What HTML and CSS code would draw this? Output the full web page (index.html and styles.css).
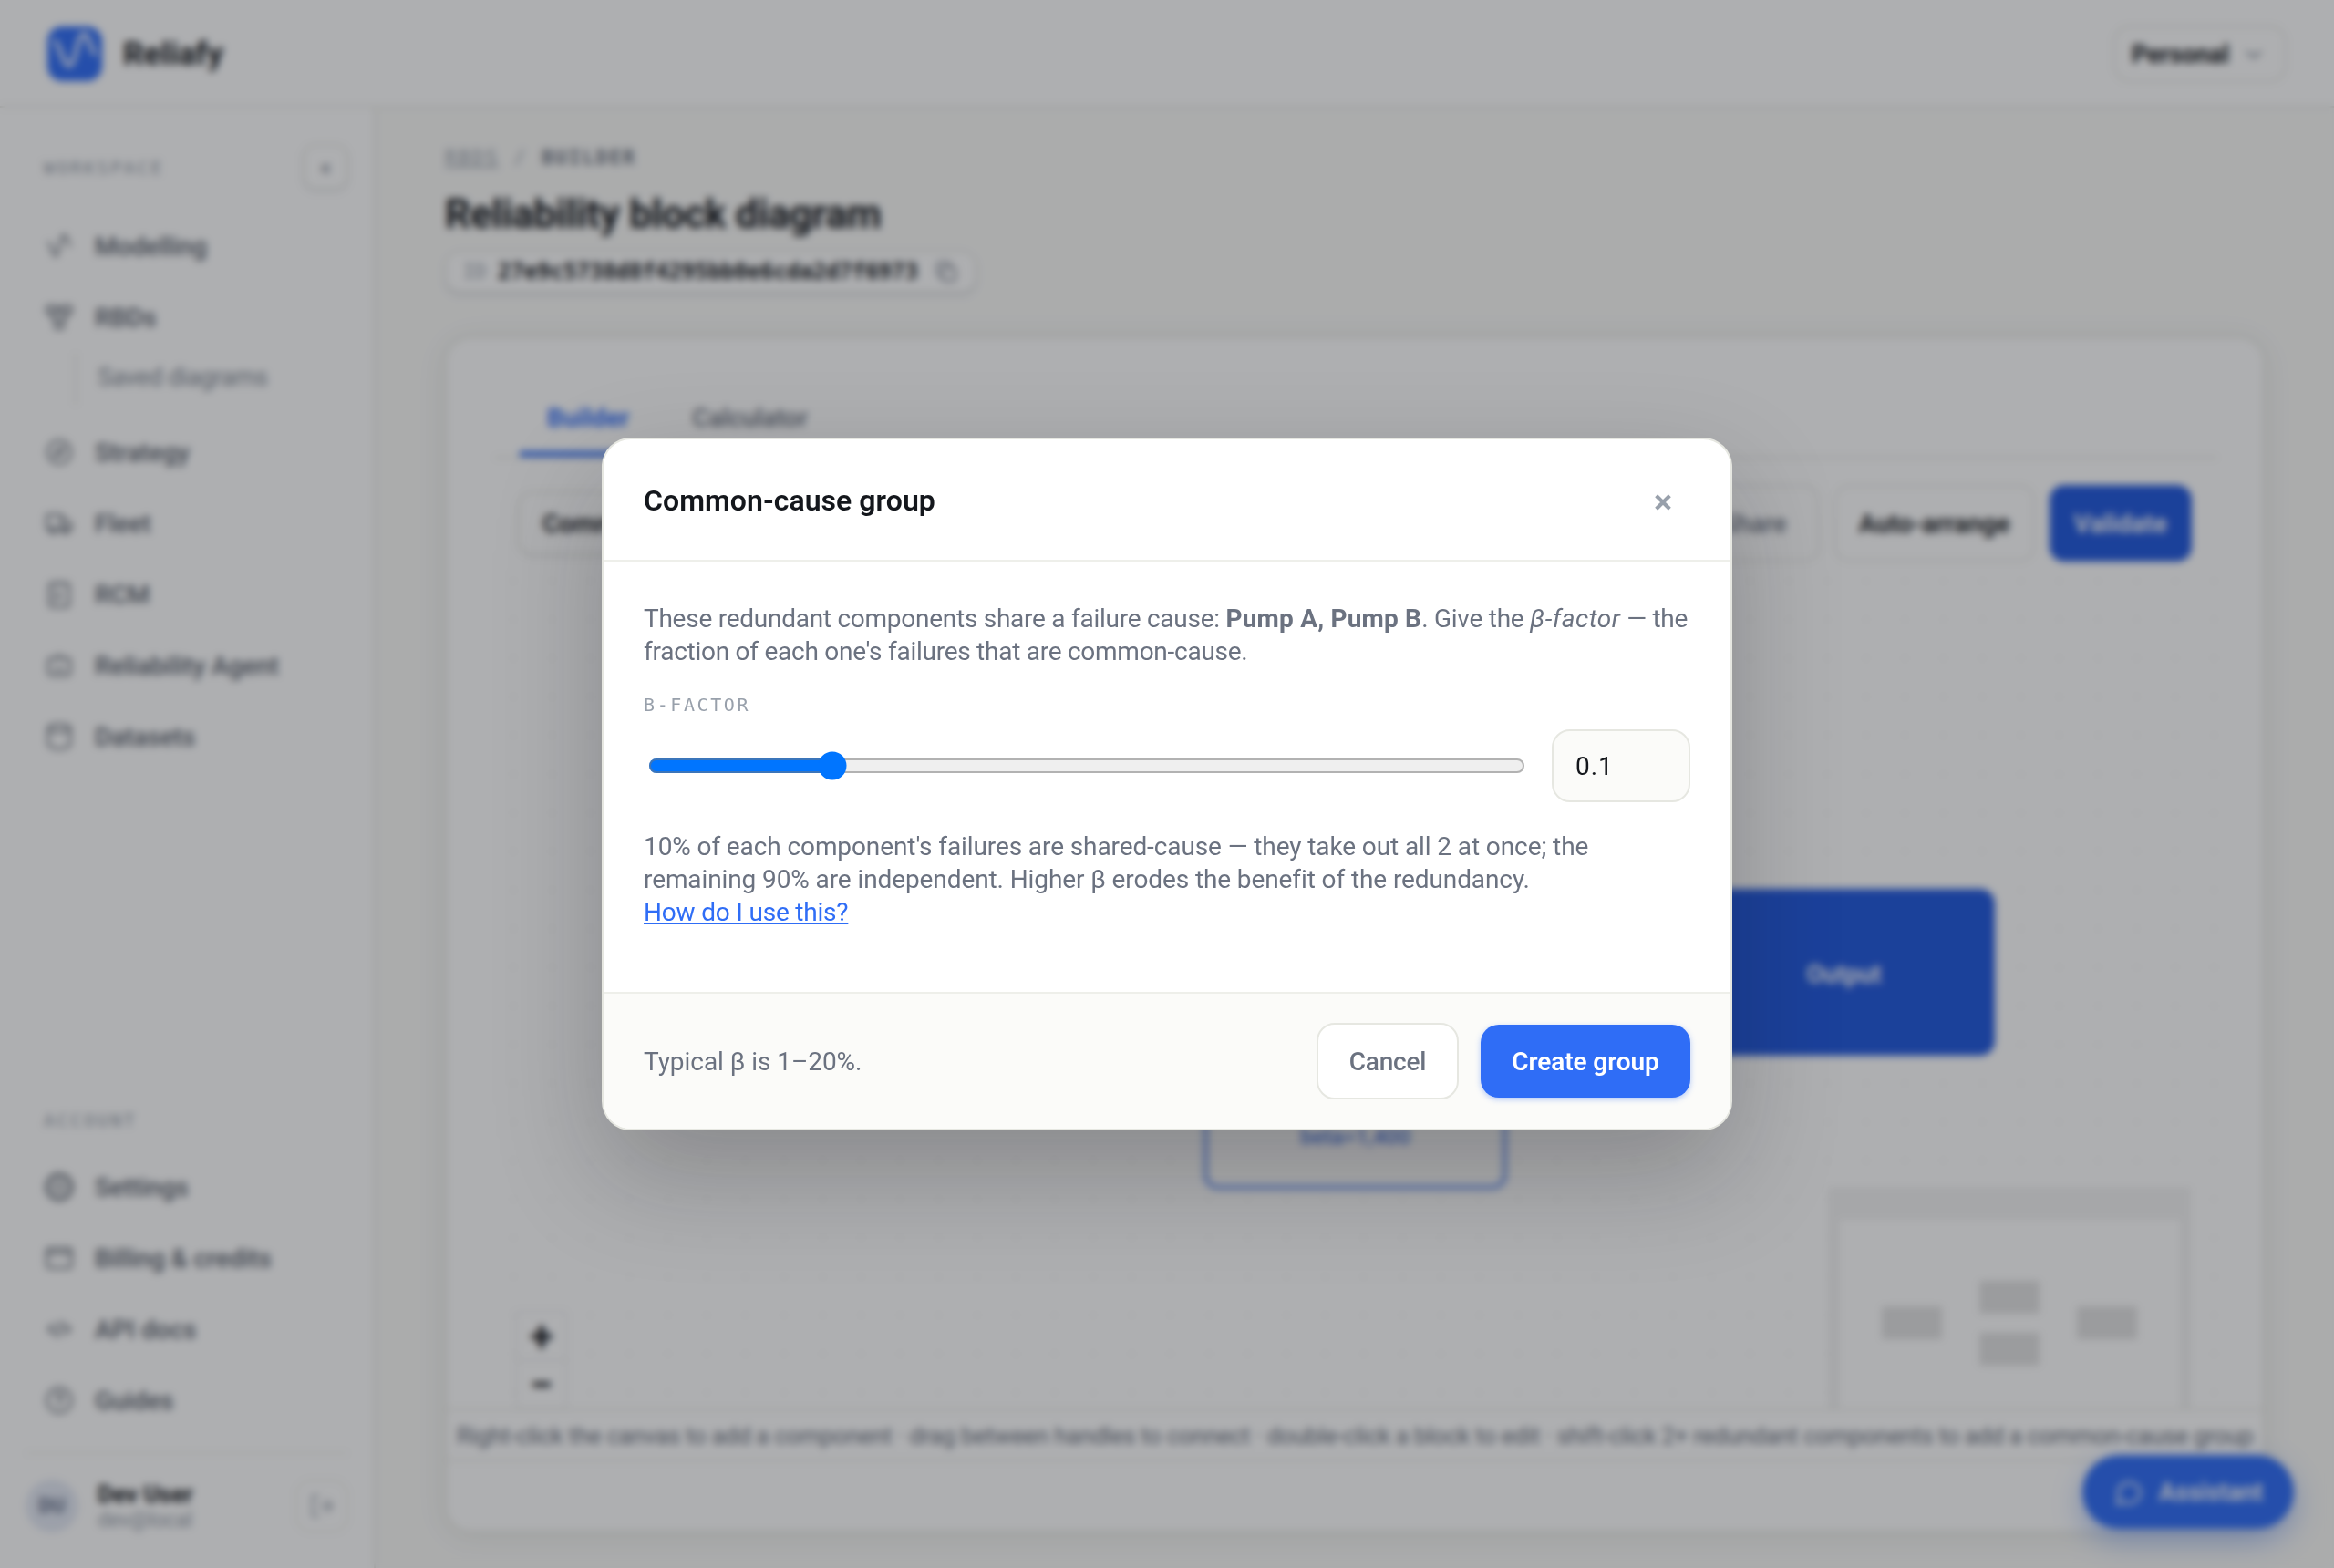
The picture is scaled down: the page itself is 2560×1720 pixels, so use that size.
FILE: index.html
```html
<!DOCTYPE html>
<html lang="en">
<head>
	<meta charset="UTF-8">
	<title>Reliafy</title>
	<link rel="stylesheet" href="styles.css">
</head>
<body>
	<div class="app">
		<header class="topbar">
			<div class="brand">
				<span class="logo">
					<svg viewBox="0 0 60 60"><path d="M8 16 C13 18 17 43 24 43 C31 43 33 8 40 8 C45 8 47 25 52 30"/></svg>
				</span>
				<span class="brand-name">Reliafy</span>
			</div>
			<button class="account">
				<span>Personal</span>
				<svg class="chevron" viewBox="0 0 20 20"><path d="M3 7l7 6 7-6"/></svg>
			</button>
		</header>

		<aside class="sidebar">
			<div class="side-head">
				<span class="side-label">WORKSPACE</span>
				<button class="collapse">«</button>
			</div>
			<nav class="nav">
				<a class="nav-item"><svg viewBox="0 0 24 24"><path d="M3 9c2.500 0 3 11 6 11s3.500-17 7-17c2.500 0 3 7 5 9"/></svg><span>Modelling</span></a>
				<a class="nav-item"><svg viewBox="0 0 24 24"><rect x="2" y="3" width="8" height="6" rx="1"/><rect x="14" y="3" width="8" height="6" rx="1"/><rect x="8.500" y="15" width="7" height="6" rx="1"/><path d="M10 6h4M5 9l4.500 6M19 9l-4.500 6"/></svg><span>RBDs</span></a>
				<a class="nav-sub">Saved diagrams</a>
				<a class="nav-item"><svg viewBox="0 0 24 24"><circle cx="12" cy="12" r="9.5"/><path d="M15.500 8.500l-2 5-5 2 2-5z"/></svg><span>Strategy</span></a>
				<a class="nav-item"><svg viewBox="0 0 24 24"><path d="M2 5h12v12H2zM14 9h4l4 4v4h-8"/><circle cx="7" cy="18" r="2"/><circle cx="17" cy="18" r="2"/></svg><span>Fleet</span></a>
				<a class="nav-item"><svg viewBox="0 0 24 24"><rect x="4" y="3" width="16" height="19" rx="2"/><path d="M9 3h6M8 15l2 1 4-4M8 10h3"/></svg><span>RCM</span></a>
				<a class="nav-item"><svg viewBox="0 0 24 24"><path d="M12 3v3M3 9q0-3 3-3h12q3 0 3 3v8q0 3-3 3H6q-3 0-3-3zM9 15h6"/></svg><span>Reliability Agent</span></a>
				<a class="nav-item"><svg viewBox="0 0 24 24"><ellipse cx="12" cy="5" rx="9" ry="3"/><path d="M3 5v13c0 2 4 4 9 4s9-2 9-4V5"/></svg><span>Datasets</span></a>
			</nav>
			<div class="side-bottom">
				<div class="side-label">ACCOUNT</div>
				<a class="nav-item"><svg viewBox="0 0 24 24"><circle cx="12" cy="12" r="3.5"/><circle cx="12" cy="12" r="9"/><circle cx="12" cy="12" r="11" stroke-dasharray="3 2.76"/></svg><span>Settings</span></a>
				<a class="nav-item"><svg viewBox="0 0 24 24"><rect x="2" y="4" width="20" height="16" rx="2"/><path d="M2 8h20"/></svg><span>Billing &amp; credits</span></a>
				<a class="nav-item"><svg viewBox="0 0 24 24"><path d="M8 8l-5 4 5 4M16 8l5 4-5 4M13.500 6l-3 12"/></svg><span>API docs</span></a>
				<a class="nav-item"><svg viewBox="0 0 24 24"><circle cx="12" cy="12" r="10"/><path d="M9.500 9a2.500 2.500 0 1 1 2.500 3v2M12 17v.5"/></svg><span>Guides</span></a>
				<div class="user">
					<span class="avatar">DU</span>
					<div class="user-text">
						<div class="user-name">Dev User</div>
						<div class="user-mail">dev@local</div>
					</div>
					<button class="logout"><svg viewBox="0 0 24 24"><path d="M9 3H4v18h5M10 12h11M16 7l5 5-5 5"/></svg></button>
				</div>
			</div>
		</aside>

		<main class="main">
			<div class="crumbs"><a>RBDS</a><span>/</span><b>BUILDER</b></div>
			<h1>Reliability block diagram</h1>
			<div class="id-pill">
				<span class="id-key">ID</span>
				<span class="id-value">27e9c5738d8f4295bb0e6cda2d7f6973</span>
				<svg viewBox="0 0 24 24"><rect x="8" y="8" width="13" height="13" rx="2"/><path d="M16 8V5q0-2-2-2H5Q3 3 3 5v9q0 2 2 2h3"/></svg>
			</div>
			<section class="card">
				<div class="tabs">
					<a class="tab active">Builder</a>
					<a class="tab">Calculator</a>
				</div>
				<div class="toolbar">
					<button class="tool small">Common-cause</button>
					<span class="tool-space"></span>
					<button class="tool muted">Share</button>
					<button class="tool">Auto-arrange</button>
					<button class="tool primary">Validate</button>
				</div>
				<div class="canvas">
					<div class="node output">Output</div>
					<div class="node pump">beta=1,400</div>
					<div class="zoom">
						<div>+</div>
						<div>−</div>
						<div></div>
					</div>
					<svg class="minimap" viewBox="0 0 398 300">
						<rect class="mask" width="398" height="300"/>
						<rect class="view" x="13" y="36" width="373" height="264"/>
						<rect class="mini" x="59" y="131" width="66" height="36"/>
						<rect class="mini" x="166" y="103" width="66" height="36"/>
						<rect class="mini" x="166" y="160" width="66" height="36"/>
						<rect class="mini" x="273" y="131" width="66" height="36"/>
					</svg>
				</div>
				<div class="hint">Right-click the canvas to add a component · drag between handles to connect · double-click a block to edit · shift-click 2+ redundant components to add a common-cause group</div>
			</section>
		</main>

		<button class="assistant">
			<svg viewBox="0 0 24 24"><path d="M3 21l1.500-5A8.500 8 0 1 1 8 19.500z"/></svg>
			<span>Assistant</span>
		</button>
	</div>

	<div class="overlay">
		<div class="modal">
			<div class="modal-head">
				<h2>Common-cause group</h2>
				<button class="close"><svg viewBox="0 0 16 18"><path d="M2 3l12 12M14 3L2 15"/></svg></button>
			</div>
			<div class="modal-body">
				<p class="intro">These redundant components share a failure cause: <b>Pump A, Pump B</b>. Give the <i>β-factor</i> — the<br>fraction of each one's failures that are common-cause.</p>
				<label class="field-label">B-FACTOR</label>
				<div class="beta-row">
					<input class="range" type="range" min="0" max="0.5" step="0.01" value="0.1">
					<input class="number" type="text" value="0.1">
				</div>
				<p class="explain">10% of each component's failures are shared-cause — they take out all 2 at once; the<br>remaining 90% are independent. Higher β erodes the benefit of the redundancy.<br><a>How do I use this?</a></p>
			</div>
			<div class="modal-foot">
				<span class="typical">Typical β is 1–20%.</span>
				<button class="btn cancel">Cancel</button>
				<button class="btn create">Create group</button>
			</div>
		</div>
	</div>
</body>
</html>
```

FILE: styles.css
```css
*{
	box-sizing: border-box;
	margin: 0;
	padding: 0;
}
body{
	width: 2560px;
	height: 1720px;
	overflow: hidden;
	background: #fafaf8;
	color: #14171c;
	font-family: Roboto, "Liberation Sans", sans-serif;
	font-size: 28px;
}
button, input{
	font: inherit;
	color: inherit;
	border: none;
	background: none;
}
svg{
	fill: none;
	stroke: currentColor;
	stroke-width: 1.7;
	stroke-linecap: round;
	stroke-linejoin: round;
	flex: none;
}

/* page shell */
.app{
	width: 2560px;
	height: 1720px;
	display: grid;
	grid-template-columns: 412px minmax(0, 1fr);
	grid-template-rows: 118px minmax(0, 1fr);
}
.topbar{
	grid-column: 1 / 3;
	display: flex;
	align-items: center;
	justify-content: space-between;
	padding: 1px 52px 0;
	background: #fff;
	border-bottom: 2px solid #e6e7e1;
}
.brand{
	display: flex;
	align-items: center;
	gap: 23px;
}
.logo{
	width: 60px;
	height: 60px;
	border-radius: 16px;
	background: #2f6df6;
	color: #fff;
}
.logo svg{
	display: block;
	stroke-width: 4;
}
.brand-name{
	padding-top: 2px;
	font-size: 35px;
	font-weight: 700;
	letter-spacing: 0.2px;
}
.account{
	display: flex;
	align-items: center;
	justify-content: space-between;
	width: 190px;
	height: 62px;
	padding: 2px 24px 0 18px;
	border: 2px solid #e6e7e1;
	border-radius: 18px;
	font-weight: 700;
	font-size: 27px;
	letter-spacing: -0.1px;
}
.chevron{
	width: 20px;
	height: 20px;
	color: #98a0ab;
	stroke-width: 3;
}

/* sidebar */
.sidebar{
	display: flex;
	flex-direction: column;
	padding: 40px 28px 39px;
	background: #fff;
	border-right: 2px solid #e6e7e1;
}
.side-head{
	display: flex;
	align-items: center;
	justify-content: space-between;
	height: 50px;
	margin-bottom: 23px;
}
.side-label{
	padding: 2px 0 0 20px;
	font: 20px/30px "DejaVu Sans Mono", monospace;
	letter-spacing: 2.6px;
	color: #98a0ab;
}
.collapse{
	width: 50px;
	height: 50px;
	border: 2px solid #e6e7e1;
	border-radius: 14px;
	box-shadow: 0 2px 4px rgba(20,30,80,.12);
	color: #6b7280;
	font-size: 25px;
}
.nav-item{
	display: flex;
	align-items: center;
	gap: 23px;
	height: 78px;
	padding-left: 21px;
	color: #5b626d;
	font-weight: 500;
	font-size: 28px;
	letter-spacing: -0.1px;
}
.nav-item svg{
	width: 32px;
	height: 32px;
}
.nav-sub{
	display: block;
	height: 58px;
	margin: 0 0 12px 54px;
	padding-left: 23px;
	border-left: 2px solid #e6e7e1;
	color: #828a95;
	font-size: 27px;
	line-height: 54px;
	letter-spacing: -0.4px;
}
.side-bottom{
	margin-top: auto;
}
.side-bottom .side-label{
	margin-bottom: 19px;
}
.user{
	display: flex;
	align-items: center;
	margin-top: 18px;
	padding-top: 28px;
	border-top: 2px solid #eeefea;
}
.avatar{
	width: 58px;
	height: 58px;
	margin-right: 21px;
	border-radius: 50%;
	background: #e4e9f4;
	color: #5e6a85;
	font-size: 22px;
	font-weight: 700;
	line-height: 58px;
	text-align: center;
}
.user-text{
	flex: 1;
}
.user-name{
	font-size: 26px;
	font-weight: 700;
	line-height: 32px;
}
.user-mail{
	color: #98a0ab;
	font-size: 23px;
	line-height: 26px;
	letter-spacing: -0.2px;
}
.logout{
	width: 58px;
	height: 58px;
	border: 2px solid #eeefea;
	border-radius: 16px;
	color: #98a0ab;
}
.logout svg{
	width: 30px;
	height: 30px;
	display: block;
	margin: auto;
}

/* main column */
.main{
	padding: 39px 76px 0;
}
.crumbs{
	display: flex;
	gap: 16px;
	font: 21px/32px "DejaVu Sans Mono", monospace;
	letter-spacing: 2.2px;
	color: #98a0ab;
}
.crumbs a{
	text-decoration: underline;
}
.crumbs b{
	color: #6b7280;
}
h1{
	margin-top: 18px;
	font-size: 44px;
	font-weight: 700;
	line-height: 56px;
	letter-spacing: -0.35px;
}
.id-pill{
	display: flex;
	align-items: center;
	width: 583px;
	height: 46px;
	margin-top: 12px;
	padding-left: 18px;
	background: #fff;
	border: 2px solid #e6e7e1;
	border-radius: 16px;
	box-shadow: 0 3px 4px rgba(20,30,100,.12);
	font-family: "DejaVu Sans Mono", monospace;
}
.id-key{
	width: 38px;
	color: #98a0ab;
	font-size: 21px;
}
.id-value{
	width: 479px;
	font-size: 24px;
	font-weight: 700;
	letter-spacing: -0.05px;
}
.id-pill svg{
	width: 26px;
	height: 26px;
	color: #6b7280;
}
.card{
	display: flex;
	flex-direction: column;
	height: 1312px;
	margin-top: 48px;
	padding-top: 46px;
	background: #fff;
	border: 2px solid #e6e7e1;
	border-radius: 28px;
	box-shadow: 0 4px 32px rgba(40,50,20,.08);
}
.tabs{
	display: flex;
	gap: 9px;
	height: 86px;
	margin: 0 50px 0 52px;
	padding: 0 28px;
	border-bottom: 2px solid #e6e7e1;
}
.tab{
	padding: 0 30px;
	color: #6b7280;
	font-weight: 500;
	line-height: 83px;
	letter-spacing: -0.1px;
}
.tab.active{
	color: #2f6df6;
	border-bottom: 6px solid #2f6df6;
	font-weight: 700;
	letter-spacing: 0.1px;
}
.toolbar{
	display: flex;
	align-items: center;
	gap: 16px;
	height: 84px;
	margin: 29px 78px 0;
}
.tool{
	height: 84px;
	padding: 0 25px;
	border: 2px solid #e6e7e1;
	border-radius: 16px;
	font-weight: 600;
}
.tool.small{
	height: 70px;
	box-shadow: 0 2px 4px rgba(20,30,40,.08);
}
.tool-space{
	flex: 1;
}
.tool.muted{
	color: #6b7280;
	padding: 0 34px;
	font-weight: 500;
}
.tool.primary{
	background: #2158dd;
	border-color: #2158dd;
	color: #fff;
}
.canvas{
	position: relative;
	flex: 1;
	margin: 0 52px;
	overflow: hidden;
	background-image: radial-gradient(circle, #f0f0ee 1.5px, transparent 2px);
	background-size: 42.4px 42.4px;
}
/* nodes sit on a free canvas */
.node{
	position: absolute;
	width: 331px;
	height: 183px;
	border-radius: 16px;
	text-align: center;
}
.output{
	left: 1315px;
	top: 359px;
	background: #2158dd;
	color: #fff;
	font-size: 27px;
	font-weight: 600;
	line-height: 188px;
}
.pump{
	left: 778px;
	top: 506px;
	width: 333px;
	background: #fff;
	border: 5px solid #7b9ff0;
	color: #4d78e0;
	font-size: 24px;
	font-weight: 500;
	line-height: 240px;
}
.zoom{
	position: absolute;
	left: 26px;
	top: 824px;
	width: 52px;
	box-shadow: 0 0 4px 1px rgba(20,20,60,.12);
}
.zoom div{
	height: 53px;
	border-bottom: 2px solid #e9e9ec;
	background: #fff;
	font-size: 46px;
	font-weight: 700;
	line-height: 53px;
	text-align: center;
}
.minimap{
	position: absolute;
	left: 1463px;
	top: 686px;
	width: 398px;
	height: 300px;
	stroke: none;
}
.mask{
	fill: #f3f3f3;
}
.view{
	fill: #fff;
}
.mini{
	fill: #e2e2e2;
}
.hint{
	height: 58px;
	margin-bottom: 76px;
	padding-left: 11px;
	border-top: 2px solid #e9eae5;
	border-bottom: 2px solid #e9eae5;
	color: #6b7280;
	font-size: 26px;
	line-height: 56px;
	letter-spacing: -0.3px;
	white-space: nowrap;
}
.assistant{
	position: fixed;
	right: 44px;
	bottom: 43px;
	display: flex;
	align-items: center;
	gap: 16px;
	width: 232px;
	height: 81px;
	padding-left: 34px;
	border-radius: 41px;
	background: #2f6df6;
	box-shadow: 0 12px 32px rgba(47,109,246,.4);
	color: #fff;
	font-size: 27px;
	font-weight: 600;
}
.assistant svg{
	width: 34px;
	height: 34px;
}

/* dialog */
.overlay{
	position: fixed;
	inset: 0;
	display: flex;
	align-items: center;
	justify-content: center;
	background: rgba(17,20,26,.34);
	backdrop-filter: blur(4px);
}
.modal{
	display: flex;
	flex-direction: column;
	width: 1240px;
	height: 760px;
	overflow: hidden;
	background: #fff;
	border: 2px solid #e6e7e1;
	border-radius: 32px;
	box-shadow: 0 48px 120px rgba(16,18,22,.24);
}
.modal-head{
	display: flex;
	align-items: center;
	justify-content: space-between;
	height: 134px;
	padding: 2px 44px 0;
	border-bottom: 2px solid #eeefea;
}
h2{
	font-size: 32px;
	font-weight: 600;
	letter-spacing: 0.05px;
}
.close{
	width: 60px;
	height: 60px;
	color: #98a0ab;
}
.close svg{
	width: 20px;
	height: 22px;
	stroke-width: 3.4;
	stroke-linecap: butt;
	vertical-align: middle;
}
.modal-body{
	flex: 1;
	padding: 45px 44px 0;
}
.modal-body p{
	color: #6b7280;
	line-height: 36px;
	letter-spacing: -0.1px;
	white-space: nowrap;
}
.modal-body .intro{
	letter-spacing: -0.26px;
}
.intro b{
	letter-spacing: 0.2px;
}
.intro i{
	letter-spacing: 0.5px;
}
.field-label{
	display: block;
	margin-top: 25px;
	color: #98a0ab;
	font: 20px/30px "DejaVu Sans Mono", monospace;
	letter-spacing: 2.6px;
}
.beta-row{
	display: flex;
	align-items: center;
	justify-content: space-between;
	height: 80px;
	margin-top: 12px;
	padding-left: 5px;
}
.range{
	zoom: 2;
	width: 481px;
	height: 16px;
	margin-right: 14px;
}
.number{
	width: 152px;
	height: 80px;
	padding-left: 24px;
	background: #fbfbf9;
	border: 2px solid #e6e7e1;
	border-radius: 20px;
	letter-spacing: 0.9px;
}
.explain{
	margin-top: 31px;
}
.explain a{
	color: #2f6df6;
	text-decoration: underline;
	letter-spacing: -0.2px;
}
.modal-foot{
	display: flex;
	align-items: center;
	height: 150px;
	padding: 0 44px;
	background: #fbfbf9;
	border-top: 2px solid #eeefea;
}
.typical{
	flex: 1;
	color: #6b7280;
	letter-spacing: -0.05px;
}
.btn{
	border-radius: 20px;
}
.cancel{
	width: 156px;
	height: 84px;
	background: #fff;
	border: 2px solid #e6e7e1;
	color: #6b7280;
	font-weight: 500;
	letter-spacing: -0.2px;
}
.create{
	width: 230px;
	height: 80px;
	margin-left: 24px;
	background: #2f6df6;
	box-shadow: 0 2px 6px rgba(47,109,246,.35);
	color: #fff;
	font-weight: 600;
	letter-spacing: -0.1px;
}
```
